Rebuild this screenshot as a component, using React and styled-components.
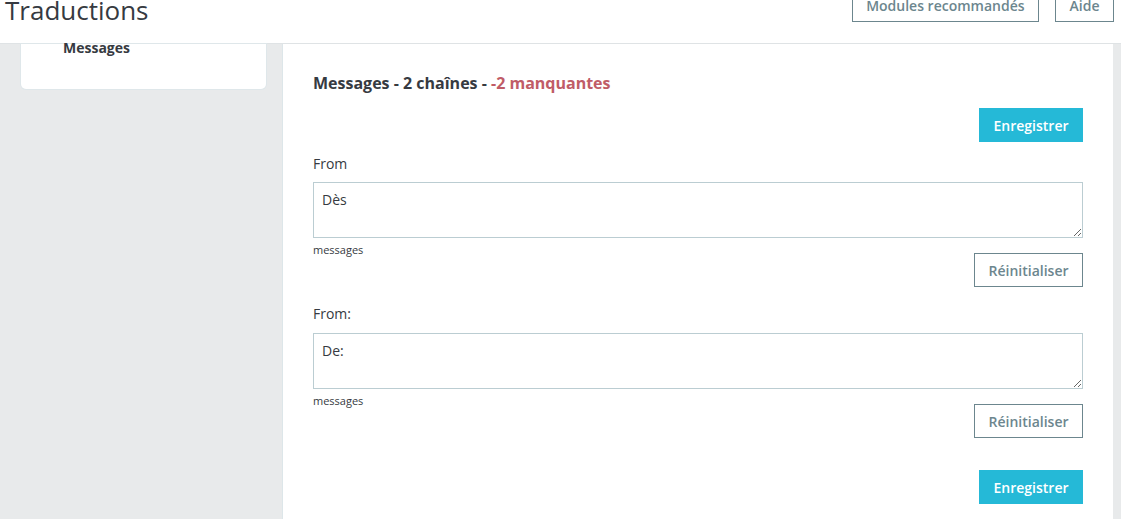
import styled, { createGlobalStyle } from 'styled-components'

const GlobalStyle = createGlobalStyle`
    html, body {
        margin: 0;
        padding: 0;
        height: 100%;
        overflow: hidden;
    }
    body {
        background: #e8eaeb;
        font-family: "Open Sans", "Liberation Sans", sans-serif;
        color: #363a41;
    }
`;

const Header = styled.header`
    height: 44px;
    background: #fff;
    border-bottom: 1px solid #dfe3e5;
    box-sizing: border-box;
    display: flex;
    justify-content: space-between;
    align-items: flex-end;
    padding: 0 7px 0 5px;
    overflow: hidden;
`;

const Title = styled.h1`
    margin: 0 0 20px;
    font-size: 26px;
    font-weight: 400;
    line-height: 1;
    color: #363a41;
`;

const Toolbar = styled.div`
    display: flex;
    gap: 16px;
    align-self: flex-start;
    margin-top: -12px;
`;

const OutlineButton = styled.button`
    font-family: inherit;
    font-size: 14px;
    font-weight: 600;
    color: #6c868e;
    background: #fff;
    border: 1px solid #6c868e;
    height: 34px;
    padding: 0 13.5px;
    cursor: pointer;
`;

const PrimaryButton = styled.button`
    font-family: inherit;
    font-size: 14px;
    font-weight: 600;
    color: #fff;
    background: #25b9d7;
    border: none;
    height: 34px;
    padding: 0 14.5px;
    cursor: pointer;
`;

const Layout = styled.div`
    display: flex;
    align-items: flex-start;
    gap: 17px;
    padding: 0 8px 0 21px;
`;

const Sidebar = styled.aside`
    width: 245px;
    height: 45px;
    background: #fff;
    border-radius: 0 0 5px 5px;
    box-shadow: 0 0 0 1px #dfe7ea;
    flex-shrink: 0;
`;

const SideLink = styled.div`
    padding: 0 0 0 42px;
    margin-top: -5px;
    font-size: 14px;
    font-weight: 700;
    color: #363a41;
    line-height: 18px;
`;

const Main = styled.main`
    flex: 1;
    background: #fff;
    box-shadow: -1px 0 0 #dde6e9;
    padding: 29px 30px 30px;
    min-height: 480px;
`;

const Heading = styled.h2`
    margin: 0;
    font-size: 16px;
    font-weight: 700;
    line-height: 20px;
    color: #363a41;
    span {
        color: #c05c67;
    }
`;

const Actions = styled.div`
    display: flex;
    justify-content: flex-end;
    margin-top: ${p => p.$top || 0}px;
`;

const Field = styled.div`
    margin-top: ${p => p.$top || 0}px;
`;

const Label = styled.label`
    display: block;
    font-size: 14px;
    line-height: 20px;
    color: #363a41;
`;

const TextArea = styled.textarea`
    display: block;
    box-sizing: border-box;
    width: 100%;
    height: 56px;
    margin-top: ${p => p.$top}px;
    padding: 7px 8px;
    border: 1px solid #bbcdd2;
    border-radius: 0;
    font-family: inherit;
    font-size: 14px;
    line-height: 20px;
    color: #363a41;
    resize: vertical;
    outline: none;
`;

const Domain = styled.div`
    font-size: 11px;
    line-height: 14px;
    margin-top: 5px;
    color: #363a41;
`;

const fields = [
    { source: 'From', value: 'Dès' },
    { source: 'From:', value: 'De:' },
]

const App = () => {
    return (
        <>
            <GlobalStyle />
            <Header>
                <Title>Traductions</Title>
                <Toolbar>
                    <OutlineButton>Modules recommandés</OutlineButton>
                    <OutlineButton>Aide</OutlineButton>
                </Toolbar>
            </Header>
            <Layout>
                <Sidebar>
                    <SideLink>Messages</SideLink>
                </Sidebar>
                <Main>
                    <Heading>
                        Messages - 2 chaînes - <span>-2 manquantes</span>
                    </Heading>
                    <Actions $top={15}>
                        <PrimaryButton>Enregistrer</PrimaryButton>
                    </Actions>
                    {fields.map((f, i) => (
                        <Field key={i} $top={i === 0 ? 12 : 17}>
                            <Label>{f.source}</Label>
                            <TextArea $top={i === 0 ? 8 : 9} defaultValue={f.value} />
                            <Domain>messages</Domain>
                            <Actions $top={-4}>
                                <OutlineButton>Réinitialiser</OutlineButton>
                            </Actions>
                        </Field>
                    ))}
                    <Actions $top={32}>
                        <PrimaryButton>Enregistrer</PrimaryButton>
                    </Actions>
                </Main>
            </Layout>
        </>
    )
}

export default App;
